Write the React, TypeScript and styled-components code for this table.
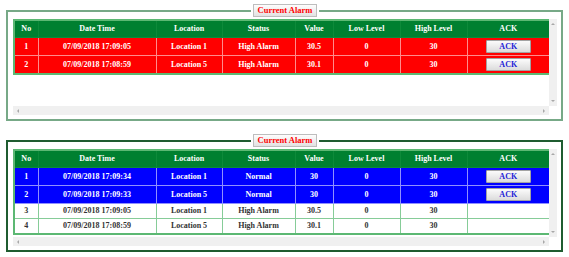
import styled, { createGlobalStyle } from "styled-components";

type Tone = "red" | "blue" | "plain";

interface AlarmRow {
    no: number;
    time: string;
    location: string;
    status: string;
    value: string;
    low: string;
    high: string;
    tone: Tone;
    ack: boolean;
}

const current: AlarmRow[] = [
    { no: 1, time: "07/09/2018 17:09:05", location: "Location 1", status: "High Alarm", value: "30.5", low: "0", high: "30", tone: "red", ack: true },
    { no: 2, time: "07/09/2018 17:08:59", location: "Location 5", status: "High Alarm", value: "30.1", low: "0", high: "30", tone: "red", ack: true },
];

const history: AlarmRow[] = [
    { no: 1, time: "07/09/2018 17:09:34", location: "Location 1", status: "Normal", value: "30", low: "0", high: "30", tone: "blue", ack: true },
    { no: 2, time: "07/09/2018 17:09:33", location: "Location 5", status: "Normal", value: "30", low: "0", high: "30", tone: "blue", ack: true },
    { no: 3, time: "07/09/2018 17:09:05", location: "Location 1", status: "High Alarm", value: "30.5", low: "0", high: "30", tone: "plain", ack: false },
    { no: 4, time: "07/09/2018 17:08:59", location: "Location 5", status: "High Alarm", value: "30.1", low: "0", high: "30", tone: "plain", ack: false },
];

const columns = [
    { title: "No", width: 24 },
    { title: "Date Time", width: 118 },
    { title: "Location", width: 66 },
    { title: "Status", width: 73 },
    { title: "Value", width: 38 },
    { title: "Low Level", width: 67 },
    { title: "High Level", width: 67 },
    { title: "ACK", width: 83 },
];

const tones = {
    red: { bg: "#ff0000", fg: "#ffffff", line: "#ff8c8c" },
    blue: { bg: "#0000ff", fg: "#ffffff", line: "#9090ff" },
    plain: { bg: "#ffffff", fg: "#333333", line: "#86cc98" },
};

const AlarmPanel = (props: { rows: AlarmRow[]; border: string; height: number }) => {
    const { rows, border, height } = props;
    return (
        <Panel $border={border}>
            <Legend>
                <LegendLabel>Current Alarm</LegendLabel>
            </Legend>
            <ScrollFrame $height={height}>
                <Viewport>
                    <Table>
                        <colgroup>
                            {columns.map((c) => (
                                <col key={c.title} style={{ width: c.width }} />
                            ))}
                        </colgroup>
                        <thead>
                            <tr>
                                {columns.map((c) => (
                                    <Th key={c.title}>{c.title}</Th>
                                ))}
                            </tr>
                        </thead>
                        <tbody>
                            {rows.map((r) => (
                                <tr key={r.no}>
                                    <Td $tone={r.tone}>{r.no}</Td>
                                    <Td $tone={r.tone}>{r.time}</Td>
                                    <Td $tone={r.tone}>{r.location}</Td>
                                    <Td $tone={r.tone}>{r.status}</Td>
                                    <Td $tone={r.tone}>{r.value}</Td>
                                    <Td $tone={r.tone}>{r.low}</Td>
                                    <Td $tone={r.tone}>{r.high}</Td>
                                    <Td $tone={r.tone}>{r.ack && <AckButton>ACK</AckButton>}</Td>
                                </tr>
                            ))}
                        </tbody>
                    </Table>
                </Viewport>
                <VBar>
                    <Arrow $dir="up" />
                    <Arrow $dir="down" />
                </VBar>
                <HBar>
                    <Arrow $dir="left" />
                    <Arrow $dir="right" />
                </HBar>
                <Corner />
            </ScrollFrame>
        </Panel>
    );
};

const App = () => {
    return (
        <Page>
            <GlobalStyle />
            <AlarmPanel rows={current} border="#77a987" height={96} />
            <AlarmPanel rows={history} border="#1f5c30" height={97} />
        </Page>
    );
};

const GlobalStyle = createGlobalStyle`
html, body {
    margin:0;
    padding:0;
    background:#ffffff;
}
body {
    font-family: "Liberation Serif", "Times New Roman", serif;
}
`;

const Page = styled.div`
width:569px;
padding-top:4px;
display:flex;
flex-direction:column;
gap:13px;
`;

const Panel = styled.fieldset<{ $border: string }>`
margin:0 6px;
padding:2px 4px 4px 5px;
border:2px solid ${(p) => p.$border};
min-width:0;
`;

const Legend = styled.legend`
margin:0 auto;
padding:0 2px;
`;

const LegendLabel = styled.span`
display:block;
padding:1px 4px;
border:1px solid #bdbdbd;
background:linear-gradient(#fdfdfd, #e2e2e2);
color:#ff0000;
font-weight:700;
font-size:8.5px;
line-height:9px;
`;

const ScrollFrame = styled.div<{ $height: number }>`
height:${(p) => p.$height}px;
display:grid;
grid-template-columns:1fr 8px;
grid-template-rows:1fr 9px;
`;

const Viewport = styled.div`
overflow:hidden;
`;

const VBar = styled.div`
background:#f0f0f0;
display:flex;
flex-direction:column;
justify-content:space-between;
align-items:center;
padding:4px 0;
`;

const HBar = styled.div`
background:#f0f0f0;
display:flex;
justify-content:space-between;
align-items:center;
padding:0 4px;
`;

const Corner = styled.div`
background:#ffffff;
`;

const Arrow = styled.span<{ $dir: "up" | "down" | "left" | "right" }>`
width:0;
height:0;
border:2px solid transparent;
${(p) =>
    p.$dir === "up"
        ? "border-bottom-color:#a8a8a8; border-top-width:0;"
        : p.$dir === "down"
        ? "border-top-color:#a8a8a8; border-bottom-width:0;"
        : p.$dir === "left"
        ? "border-right-color:#a8a8a8; border-left-width:0;"
        : "border-left-color:#a8a8a8; border-right-width:0;"}
`;

const Table = styled.table`
width:536px;
table-layout:fixed;
border-collapse:collapse;
border:2px solid #5cb873;
margin-bottom:4px;
`;

const Th = styled.th`
background:#008030;
color:#ffffff;
font-size:8px;
font-weight:700;
line-height:10px;
padding:3px 2px;
border:1px solid #0d8a3a;
text-align:center;
white-space:nowrap;
`;

const Td = styled.td<{ $tone: Tone }>`
background:${(p) => tones[p.$tone].bg};
color:${(p) => tones[p.$tone].fg};
border:1px solid ${(p) => tones[p.$tone].line};
font-size:8px;
font-weight:700;
line-height:10px;
padding:2px 2px;
text-align:center;
white-space:nowrap;
`;

const AckButton = styled.button`
display:block;
margin:0 auto;
width:45px;
height:13px;
padding:0;
font-family:"Liberation Serif", "Times New Roman", serif;
font-size:8px;
font-weight:700;
line-height:10px;
color:#1c1cd8;
background:linear-gradient(#fbfbfb, #dcdcdc);
border:1px solid #a3a3a3;
border-radius:1px;
`;

export default App;
